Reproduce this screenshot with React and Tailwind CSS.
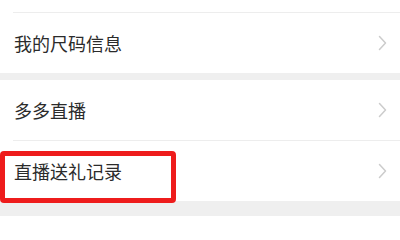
import React from "react";

function Chevron() {
  return (
    <svg width="11" height="18" viewBox="0 0 11 18" className="shrink-0">
      <path d="M2.5 2.5 L8.5 9 L2.5 15.5" fill="none" stroke="#cccccc" strokeWidth="1.5" strokeLinecap="round" strokeLinejoin="round" />
    </svg>
  );
}

function Row({ label, border = false, children }) {
  return (
    <div className="relative bg-white">
      <div className="flex h-[60px] items-center justify-between pl-[14px] pr-[12px]">
        <span className="text-[18px] leading-none text-[#2b2b2b]">{label}</span>
        <Chevron />
      </div>
      {border && <div className="ml-[13px] h-px bg-[#ededed]" />}
      {children}
    </div>
  );
}

export default function App() {
  return (
    <div
      className="flex h-[216px] w-[400px] flex-col overflow-hidden bg-[#efefef]"
      style={{ fontFamily: '"Noto Sans CJK SC", "Noto Sans", sans-serif' }}
    >
      <div className="bg-white">
        <div className="h-[12px]" />
        <div className="ml-[13px] h-px bg-[#ededed]" />
      </div>
      <Row label="我的尺码信息" />
      <div className="h-[7px] shrink-0" />
      <Row label="多多直播" border />
      <Row label="直播送礼记录">
        <div className="absolute left-0 top-[10px] h-[52px] w-[176px] rounded-[4px] border-[5px] border-[#ee1c1c]" />
      </Row>
    </div>
  );
}
